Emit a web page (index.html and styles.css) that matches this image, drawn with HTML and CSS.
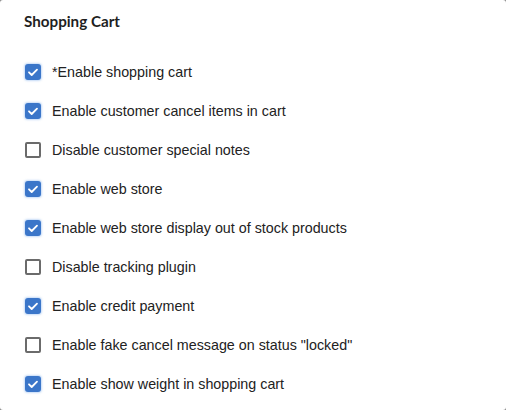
FILE: index.html
```html
<!DOCTYPE html>
<html>
<head>
<meta charset="utf-8">
<link rel="stylesheet" href="styles.css">
</head>
<body>
<div class="card">
  <h2 class="title">Shopping Cart</h2>
  <ul class="list">
    <li class="row"><span class="box on"><svg viewBox="0 0 16 16"><path d="M4 8.3l2.7 2.7L12 5.6"/></svg></span><span class="label">*Enable shopping cart</span></li>
    <li class="row"><span class="box on"><svg viewBox="0 0 16 16"><path d="M4 8.3l2.7 2.7L12 5.6"/></svg></span><span class="label">Enable customer cancel items in cart</span></li>
    <li class="row"><span class="box"></span><span class="label">Disable customer special notes</span></li>
    <li class="row"><span class="box on"><svg viewBox="0 0 16 16"><path d="M4 8.3l2.7 2.7L12 5.6"/></svg></span><span class="label">Enable web store</span></li>
    <li class="row"><span class="box on"><svg viewBox="0 0 16 16"><path d="M4 8.3l2.7 2.7L12 5.6"/></svg></span><span class="label">Enable web store display out of stock products</span></li>
    <li class="row"><span class="box"></span><span class="label">Disable tracking plugin</span></li>
    <li class="row"><span class="box on"><svg viewBox="0 0 16 16"><path d="M4 8.3l2.7 2.7L12 5.6"/></svg></span><span class="label">Enable credit payment</span></li>
    <li class="row"><span class="box"></span><span class="label">Enable fake cancel message on status "locked"</span></li>
    <li class="row"><span class="box on"><svg viewBox="0 0 16 16"><path d="M4 8.3l2.7 2.7L12 5.6"/></svg></span><span class="label">Enable show weight in shopping cart</span></li>
  </ul>
</div>
</body>
</html>
```
FILE: styles.css
```css
html, body {
  margin: 0;
  padding: 0;
  background: #8a8a8a;
}
.card {
  box-sizing: border-box;
  width: 506px;
  height: 410px;
  background: #fff;
  border-radius: 3px;
  padding: 11px 24px 0 24px;
}
.title {
  margin: 0;
  font-family: Lato, "Liberation Sans", sans-serif;
  font-weight: 700;
  font-size: 15.2px;
  line-height: 20px;
  color: #1f1f1f;
}
.list {
  list-style: none;
  margin: 31px 0 0 0;
  padding: 0;
  display: flex;
  flex-direction: column;
  gap: 19px;
}
.row {
  display: flex;
  align-items: center;
  height: 20px;
}
.box {
  box-sizing: border-box;
  width: 16px;
  height: 16px;
  border: 2px solid #6b6b6b;
  border-radius: 2px;
  margin-left: 1px;
  flex: none;
  display: flex;
}
.box.on {
  border: none;
  background: #3b76c9;
  border-radius: 3px;
  box-shadow: 0 0 2px 1px rgba(90, 150, 230, 0.35);
}
.box svg {
  width: 16px;
  height: 16px;
  fill: none;
  stroke: #fff;
  stroke-width: 1.8;
  stroke-linecap: round;
  stroke-linejoin: round;
}
.label {
  margin-left: 11px;
  font-family: "Liberation Sans", Arial, sans-serif;
  font-size: 14.3px;
  color: #222;
}
```
